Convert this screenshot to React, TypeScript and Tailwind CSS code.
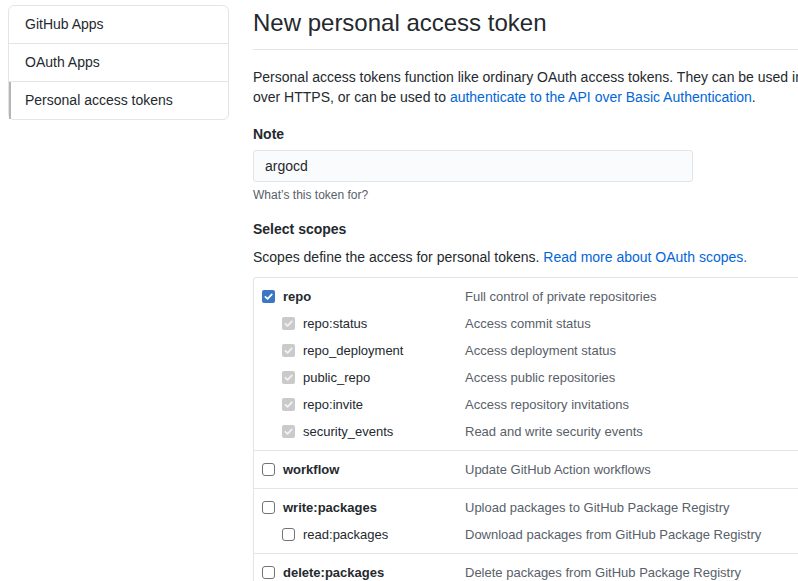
import React from 'react'

type Scope = {
  name: string
  desc: string
  checked?: boolean
  children?: Array<[string, string]>
}

const scopes: Array<Scope> = [
  {
    name: 'repo',
    desc: 'Full control of private repositories',
    checked: true,
    children: [
      ['repo:status', 'Access commit status'],
      ['repo_deployment', 'Access deployment status'],
      ['public_repo', 'Access public repositories'],
      ['repo:invite', 'Access repository invitations'],
      ['security_events', 'Read and write security events'],
    ],
  },
  { name: 'workflow', desc: 'Update GitHub Action workflows' },
  {
    name: 'write:packages',
    desc: 'Upload packages to GitHub Package Registry',
    children: [['read:packages', 'Download packages from GitHub Package Registry']],
  },
  { name: 'delete:packages', desc: 'Delete packages from GitHub Package Registry' },
  {
    name: 'admin:org',
    desc: 'Full control of orgs and teams, read and write org projects',
    children: [['write:org', 'Read and write org and team membership, read and write org projects']],
  },
]

const menu = ['GitHub Apps', 'OAuth Apps', 'Personal access tokens']

const Check = ({ color }: { color: string }) => (
  <svg viewBox="0 0 12 12" className="h-[11px] w-[11px]">
    <path d="M2.6 6.3 5 8.6 9.6 3.6" fill="none" stroke={color} strokeWidth="1.9" strokeLinecap="round" strokeLinejoin="round" />
  </svg>
)

const Box = ({ state }: { state: 'checked' | 'disabled' | 'off' }) => {
  if (state === 'checked')
    return (
      <span className="flex h-[13px] w-[13px] shrink-0 items-center justify-center rounded-[2px] bg-[#3b77c3]">
        <Check color="#ffffff" />
      </span>
    )
  if (state === 'disabled')
    return (
      <span className="flex h-[13px] w-[13px] shrink-0 items-center justify-center rounded-[2px] bg-[#cacaca]">
        <Check color="#f2f2f2" />
      </span>
    )
  return <span className="h-[13px] w-[13px] shrink-0 rounded-[3px] border border-[#737373] bg-white" />
}

const Row = ({ name, desc, child, state }: { name: string; desc: string; child?: boolean; state: 'checked' | 'disabled' | 'off' }) => (
  <div className="flex h-[27px] items-center">
    <div className={`flex w-[211px] shrink-0 items-center gap-2 ${child ? 'pl-[28px]' : 'pl-2'}`}>
      <Box state={state} />
      <span className={`text-[13px] text-[#24292e] ${child ? '' : 'font-bold'}`}>{name}</span>
    </div>
    <span className="whitespace-nowrap text-[13px] text-[#586069]">{desc}</span>
  </div>
)

export default function App() {
  return (
    <div className="flex h-[581px] w-[798px] overflow-hidden bg-white font-['Liberation_Sans',Arial,sans-serif] text-[#24292e]">
      <aside className="ml-2 mt-[5px] w-[221px] shrink-0 self-start rounded-md border border-[#e1e4e8]">
        {menu.map((item, i) => (
          <div
            key={item}
            className={`flex items-center text-[14px] ${i < menu.length - 1 ? 'h-[38px] border-b border-[#e1e4e8] pl-4' : 'h-[37px] border-l-2 border-l-[#b5b5b5] pl-[14px]'}`}
          >
            {item}
          </div>
        ))}
      </aside>

      <main className="ml-6 w-[790px] shrink-0 pt-[8px]">
        <h1 className="border-b border-[#e1e4e8] pb-[11px] text-[24px] leading-[30px] font-normal">New personal access token</h1>
        <p className="mt-[17px] text-[14px] leading-[20px]">
          <span className="whitespace-nowrap">
            Personal access tokens function like ordinary OAuth access tokens. They can be used instead of a password for Git
          </span>
          <br />
          over HTTPS, or can be used to <a className="text-[#0366d6]">authenticate to the API over Basic Authentication</a>.
        </p>

        <div className="mt-[17px] text-[14px] leading-[20px] font-bold">Note</div>
        <div className="mt-[6px] flex h-[32px] w-[440px] items-center rounded-[3px] border border-[#e1e4e8] bg-[#fafbfc] px-[11px] text-[14px]">
          argocd
        </div>
        <div className="mt-[5px] text-[12px] leading-[16px] text-[#586069]">What’s this token for?</div>

        <div className="mt-[16px] text-[14px] leading-[20px] font-bold">Select scopes</div>
        <p className="mt-2 text-[14px] leading-[20px]">
          Scopes define the access for personal tokens. <a className="text-[#0366d6]">Read more about OAuth scopes.</a>
        </p>

        <div className="mt-[10px] rounded-[3px] border border-[#e1e4e8]">
          {scopes.map((s, i) => (
            <div key={s.name} className={`py-[5px] ${i > 0 ? 'border-t border-[#e1e4e8]' : ''}`}>
              <Row name={s.name} desc={s.desc} state={s.checked ? 'checked' : 'off'} />
              {s.children?.map(([n, d]) => (
                <Row key={n} name={n} desc={d} child state={s.checked ? 'disabled' : 'off'} />
              ))}
            </div>
          ))}
        </div>
      </main>
    </div>
  )
}
